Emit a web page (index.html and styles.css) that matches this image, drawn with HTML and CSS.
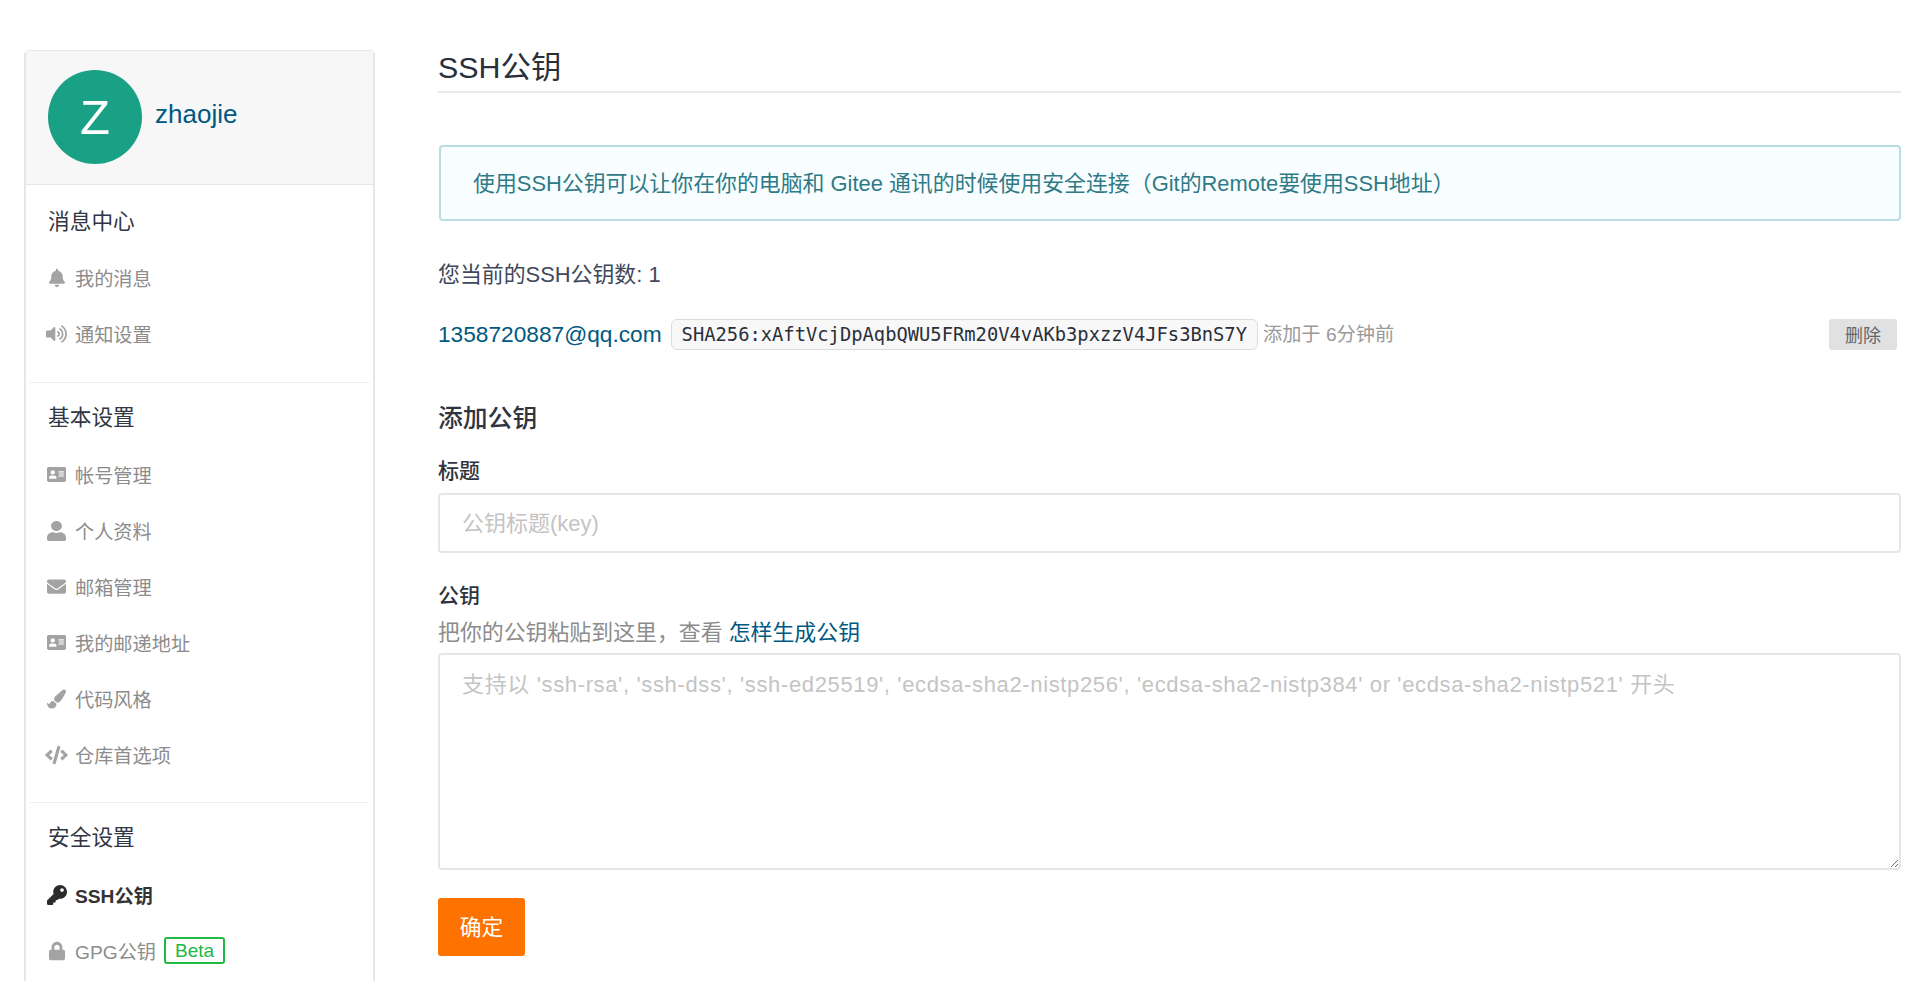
FILE: index.html
```html
<!DOCTYPE html>
<html lang="zh-CN">
<head>
<meta charset="utf-8">
<title>SSH公钥</title>
<link rel="stylesheet" href="styles.css">
</head>
<body>
<svg class="defs" width="0" height="0" aria-hidden="true">
  <symbol id="i-bell" viewBox="0 0 448 512"><path d="M224 512c35.32 0 63.97-28.65 63.97-64H160.03c0 35.35 28.65 64 63.97 64zm215.39-149.71c-19.32-20.76-55.47-51.99-55.47-154.29 0-77.7-54.48-139.9-127.94-155.16V32c0-17.67-14.32-32-31.98-32s-31.98 14.33-31.98 32v20.84C118.56 68.1 64.08 130.3 64.08 208c0 102.3-36.15 133.53-55.47 154.29-6 6.45-8.66 14.16-8.61 21.71.11 16.4 12.98 32 32.1 32h383.8c19.12 0 32-15.6 32.1-32 .05-7.55-2.61-15.27-8.61-21.71z"/></symbol>
  <symbol id="i-volume" viewBox="0 0 576 512"><path d="M215.03 71.05L126.06 160H24c-13.26 0-24 10.74-24 24v144c0 13.25 10.74 24 24 24h102.06l88.97 88.95c15.03 15.03 40.97 4.47 40.97-16.97V88.02c0-21.46-25.96-31.98-40.97-16.97zm233.32-51.08c-11.17-7.33-26.18-4.24-33.51 6.95-7.34 11.17-4.22 26.18 6.95 33.51 66.27 43.49 105.82 116.6 105.82 195.58 0 78.98-39.55 152.09-105.82 195.58-11.17 7.32-14.29 22.34-6.95 33.5 7.04 10.71 21.93 14.56 33.51 6.95C528.27 439.58 576 351.33 576 256S528.27 72.43 448.35 19.97zM480 256c0-63.53-32.06-121.94-85.77-156.24-11.19-7.14-26.03-3.82-33.12 7.46s-3.78 26.21 7.41 33.36C408.27 165.97 432 209.11 432 256s-23.73 90.03-63.48 115.42c-11.19 7.14-14.5 22.07-7.41 33.36 6.51 10.36 21.12 15.14 33.12 7.46C447.94 377.94 480 319.54 480 256zm-141.77-76.87c-11.58-6.33-26.19-2.16-32.61 9.45-6.39 11.61-2.16 26.2 9.45 32.61C327.98 228.28 336 241.63 336 256c0 14.38-8.02 27.72-20.92 34.81-11.61 6.41-15.84 21-9.45 32.61 6.44 11.66 21.05 15.8 32.61 9.45 28.23-15.55 45.77-45 45.77-76.88s-17.54-61.32-45.78-76.86z"/></symbol>
  <symbol id="i-card" viewBox="0 32 576 448"><path d="M528 32H48C21.5 32 0 53.5 0 80v352c0 26.5 21.5 48 48 48h480c26.5 0 48-21.5 48-48V80c0-26.5-21.5-48-48-48zm-352 96c35.3 0 64 28.7 64 64s-28.7 64-64 64-64-28.7-64-64 28.7-64 64-64zm112 236.8c0 10.6-10 19.2-22.4 19.2H86.4C74 384 64 375.4 64 364.8v-19.2c0-31.8 30.1-57.6 67.2-57.6h5c12.3 5.1 25.7 8 39.8 8s27.6-2.9 39.8-8h5c37.1 0 67.2 25.8 67.2 57.6v19.2zM512 312c0 4.4-3.6 8-8 8H360c-4.4 0-8-3.6-8-8v-16c0-4.4 3.6-8 8-8h144c4.4 0 8 3.6 8 8v16zm0-64c0 4.4-3.6 8-8 8H360c-4.4 0-8-3.6-8-8v-16c0-4.4 3.6-8 8-8h144c4.4 0 8 3.6 8 8v16zm0-64c0 4.4-3.6 8-8 8H360c-4.4 0-8-3.6-8-8v-16c0-4.4 3.6-8 8-8h144c4.4 0 8 3.6 8 8v16z"/></symbol>
  <symbol id="i-user" viewBox="0 0 448 512" preserveAspectRatio="none"><path d="M224 256c70.7 0 128-57.3 128-128S294.7 0 224 0 96 57.3 96 128s57.3 128 128 128zm89.6 32h-16.7c-22.2 10.2-46.9 16-72.9 16s-50.6-5.8-72.9-16h-16.7C60.2 288 0 348.2 0 422.4V464c0 26.5 21.5 48 48 48h352c26.5 0 48-21.5 48-48v-41.6c0-74.2-60.2-134.4-134.4-134.4z"/></symbol>
  <symbol id="i-mail" viewBox="0 64 512 384"><path d="M502.3 190.8c3.9-3.1 9.7-.2 9.7 4.7V400c0 26.5-21.5 48-48 48H48c-26.5 0-48-21.5-48-48V195.6c0-5 5.7-7.8 9.7-4.7 22.4 17.4 52.1 39.5 154.1 113.6 21.1 15.4 56.7 47.8 92.2 47.6 35.7.3 72-32.8 92.3-47.6 102-74.1 131.6-96.3 154-113.7zM256 320c23.2.4 56.6-29.2 73.4-41.4 132.7-96.3 142.8-104.7 173.4-128.7 5.8-4.5 9.2-11.5 9.2-18.9v-19c0-26.5-21.5-48-48-48H48C21.5 64 0 85.5 0 112v19c0 7.4 3.4 14.3 9.2 18.9 30.6 23.9 40.7 32.4 173.4 128.7 16.8 12.2 50.2 41.8 73.4 41.4z"/></symbol>
  <symbol id="i-brush" viewBox="0 0 512 512"><path d="M167.02 309.34c-40.12 2.58-76.53 17.86-97.19 72.3-2.35 6.21-8 9.98-14.59 9.98-11.11 0-45.46-27.67-55.25-34.35C0 439.62 37.93 512 128 512c75.86 0 128-43.77 128-120.19 0-3.11-.65-6.08-.97-9.13l-88.01-73.34zM457.89 0c-15.16 0-29.37 6.71-40.21 16.45C213.27 199.05 192 203.34 192 257.09c0 13.7 3.25 26.76 8.73 38.7l63.82 53.18c7.21 1.8 14.64 3.03 22.39 3.03 62.11 0 98.11-45.47 211.16-256.46 7.38-14.35 13.9-29.85 13.9-45.99C512 20.64 486 0 457.89 0z"/></symbol>
  <symbol id="i-code" viewBox="0 0 640 512"><path d="M278.9 511.5l-61-17.7c-6.4-1.8-10-8.5-8.2-14.9L346.2 8.7c1.8-6.4 8.5-10 14.9-8.2l61 17.7c6.4 1.8 10 8.5 8.2 14.9L293.8 503.3c-1.9 6.4-8.5 10.1-14.9 8.2zm-114-112.2l43.5-46.4c4.6-4.9 4.3-12.7-.8-17.2L117 256l90.6-79.7c5.1-4.5 5.5-12.3.8-17.2l-43.5-46.4c-4.5-4.8-12.1-5.1-17-.5L3.8 247.2c-5.1 4.7-5.1 12.8 0 17.5l144.1 135.1c4.9 4.6 12.5 4.4 17-.5zm327.2.6l144.1-135.1c5.1-4.7 5.1-12.8 0-17.5L492.1 112.1c-4.8-4.5-12.4-4.3-17 .5L431.6 159c-4.6 4.9-4.3 12.7.8 17.2L523 256l-90.6 79.7c-5.1 4.5-5.5 12.3-.8 17.2l43.5 46.4c4.5 4.9 12.1 5.1 17 .6z"/></symbol>
  <symbol id="i-key" viewBox="0 0 512 512"><path d="M512 176.001C512 273.203 433.202 352 336 352c-11.22 0-22.19-1.062-32.827-3.069l-24.012 27.014A23.999 23.999 0 0 1 261.223 384H224v40c0 13.255-10.745 24-24 24h-40v40c0 13.255-10.745 24-24 24H24c-13.255 0-24-10.745-24-24v-78.059c0-6.365 2.529-12.47 7.029-16.971l161.802-161.802C163.108 213.814 160 195.271 160 176 160 78.798 238.797.001 335.999 0 433.488-.001 512 78.511 512 176.001zM336 128c0 26.51 21.49 48 48 48s48-21.49 48-48-21.49-48-48-48-48 21.49-48 48z"/></symbol>
  <symbol id="i-lock" viewBox="0 0 448 512"><path d="M400 224h-24v-72C376 68.2 307.8 0 224 0S72 68.2 72 152v72H48c-26.5 0-48 21.5-48 48v192c0 26.5 21.5 48 48 48h352c26.5 0 48-21.5 48-48V272c0-26.5-21.5-48-48-48zm-104 0H152v-72c0-39.7 32.3-72 72-72s72 32.3 72 72v72z"/></symbol>
</svg>
<div class="page">
  <aside class="sidebar">
    <div class="profile">
      <div class="avatar">Z</div>
      <a class="username" href="#">zhaojie</a>
    </div>
    <section class="group group-first">
      <h4 class="group-title">消息中心</h4>
      <a class="item" href="#"><span class="ico"><svg class="w16"><use href="#i-bell"/></svg></span>我的消息</a>
      <a class="item" href="#"><span class="ico"><svg class="w21"><use href="#i-volume"/></svg></span>通知设置</a>
    </section>
    <section class="group">
      <h4 class="group-title">基本设置</h4>
      <a class="item" href="#"><span class="ico"><svg class="w19 h15"><use href="#i-card"/></svg></span>帐号管理</a>
      <a class="item" href="#"><span class="ico"><svg class="w19"><use href="#i-user"/></svg></span>个人资料</a>
      <a class="item" href="#"><span class="ico"><svg class="w19 h15"><use href="#i-mail"/></svg></span>邮箱管理</a>
      <a class="item" href="#"><span class="ico"><svg class="w19 h15"><use href="#i-card"/></svg></span>我的邮递地址</a>
      <a class="item" href="#"><span class="ico"><svg class="w19"><use href="#i-brush"/></svg></span>代码风格</a>
      <a class="item" href="#"><span class="ico"><svg class="w23"><use href="#i-code"/></svg></span>仓库首选项</a>
    </section>
    <section class="group">
      <h4 class="group-title">安全设置</h4>
      <a class="item active" href="#"><span class="ico"><svg class="w20"><use href="#i-key"/></svg></span>SSH公钥</a>
      <a class="item" href="#"><span class="ico"><svg class="w16"><use href="#i-lock"/></svg></span>GPG公钥<span class="beta">Beta</span></a>
    </section>
  </aside>
  <main class="content">
    <h1 class="title">SSH公钥</h1>
    <div class="notice">使用SSH公钥可以让你在你的电脑和 Gitee 通讯的时候使用安全连接（Git的Remote要使用SSH地址）</div>
    <p class="count">您当前的SSH公钥数: 1</p>
    <div class="key-row">
      <a class="key-name" href="#">1358720887@qq.com</a>
      <code class="fingerprint">SHA256:xAftVcjDpAqbQWU5FRm20V4vAKb3pxzzV4JFs3BnS7Y</code>
      <span class="key-time">添加于 6分钟前</span>
      <button class="btn-delete" type="button">删除</button>
    </div>
    <h3 class="add-title">添加公钥</h3>
    <form class="add-form">
      <label class="field-label" for="key-title">标题</label>
      <input class="field-input" id="key-title" type="text" placeholder="公钥标题(key)">
      <label class="field-label field-label-second" for="key-body">公钥</label>
      <p class="field-help">把你的公钥粘贴到这里，查看 <a href="#">怎样生成公钥</a></p>
      <textarea class="field-area" id="key-body" placeholder="支持以 'ssh-rsa', 'ssh-dss', 'ssh-ed25519', 'ecdsa-sha2-nistp256', 'ecdsa-sha2-nistp384' or 'ecdsa-sha2-nistp521' 开头"></textarea>
      <button class="btn-submit" type="button">确定</button>
    </form>
  </main>
</div>
</body>
</html>
```

FILE: styles.css
```css
* { box-sizing: border-box; }
html, body { margin: 0; height: 981px; overflow: hidden; background: #fff; }
body {
  font-family: "Liberation Sans", "Noto Sans CJK SC", sans-serif;
  font-size: 21.9px;
  color: #40485b;
}
a { text-decoration: none; color: #005980; }
.defs { position: absolute; }

.page { display: flex; align-items: flex-start; height: 981px; padding: 0 19px 0 24px; gap: 63px; }

.sidebar {
  flex: 0 0 351px;
  margin-top: 50px;
  height: 1100px;
  border: 1px solid #e6e6e6;
  border-width: 1px 2px;
  border-radius: 5px;
}
.profile {
  display: flex;
  align-items: center;
  gap: 13px;
  height: 134px;
  padding: 0 0 2px 22px;
  background: #f7f7f7;
  border-bottom: 1px solid #e6e6e6;
}
.avatar {
  width: 94px;
  height: 94px;
  border-radius: 50%;
  background: #1aa185;
  color: #fff;
  font-size: 49px;
  line-height: 94px;
  text-align: center;
}
.username { margin-bottom: 4px; font-size: 26px; }

.group { margin: 0 3px; padding: 20px 0 17px; border-top: 1px solid #f0f0f0; }
.group-first { padding: 22px 0 18px; border-top: 0; }
.group-first .group-title { margin-bottom: 15px; }
.group-title {
  margin: 0 0 16px 19px;
  font-size: 21.7px;
  font-weight: 400;
  line-height: 30px;
  color: #303643;
}
.item {
  display: flex;
  align-items: center;
  height: 56px;
  padding-bottom: 5px;
  font-size: 19.2px;
  color: #8c8c8c;
}
.ico { flex: 0 0 46px; display: flex; justify-content: center; padding: 0 5px 0 14px; }
.ico svg { height: 20px; fill: #a3a3a3; }
.w16 { width: 16px; }
.w19 { width: 19px; }
.w20 { width: 20px; }
.w21 { width: 21px; }
.w23 { width: 23px; }
.ico svg.h15 { height: 15px; }
.item.active { color: #333; font-weight: 700; }
.item.active svg { fill: #2b2b2b; }
.beta {
  margin-left: 8px;
  padding: 0 9px;
  height: 27px;
  border: 2px solid #21ba45;
  border-radius: 3px;
  color: #21ba45;
  font-size: 19px;
  font-weight: 500;
  line-height: 23px;
}

.content { flex: 1; min-width: 0; margin-top: 47px; }
.title {
  margin: 0;
  height: 46px;
  font-size: 30.4px;
  font-weight: 400;
  line-height: 40px;
  color: #2a2f3a;
  border-bottom: 2px solid #e8e8e8;
}
.notice {
  margin: 52px 0 0 1px;
  height: 76px;
  padding-left: 32px;
  border: 2px solid #b9dde2;
  border-radius: 4px;
  background: #f8feff;
  color: #2f7a86;
  line-height: 73px;
}
.count { margin: 39px 0 0; line-height: 30px; }
.key-row { display: flex; align-items: center; height: 32px; margin-top: 28px; }
.key-name { font-size: 22.7px; }
.fingerprint {
  margin-left: 9px;
  padding: 0 10px;
  height: 31px;
  border: 1px solid #dcdcdc;
  border-radius: 6px;
  background: #f8f8f8;
  color: #2b2f38;
  font-family: "DejaVu Sans Mono", monospace;
  font-size: 18.8px;
  line-height: 29px;
}
.key-time { margin-left: 5px; padding-bottom: 2px; font-size: 19.2px; color: #9a9a9a; }
.btn-delete {
  margin: 0 4px 0 auto;
  width: 68px;
  height: 31px;
  border: 0;
  border-radius: 3px;
  background: #e0e1e2;
  color: #666;
  font: inherit;
  font-size: 18px;
}
.add-title { margin: 52px 0 0; font-size: 24.8px; font-weight: 500; line-height: 34px; color: #2f3440; }
.add-form { display: flex; flex-direction: column; align-items: flex-start; }
.field-label { margin-top: 21px; font-size: 21px; font-weight: 500; line-height: 28px; color: #2f3440; }
.field-label-second { margin-top: 29px; }
.field-input, .field-area {
  width: 100%;
  border: 2px solid #e6e6e6;
  border-radius: 4px;
  background: #fff;
  font: inherit;
  font-size: 22px;
  color: #40485b;
  outline: 0;
}
.field-input { height: 60px; margin-top: 8px; padding: 2px 22px 0; }
.field-area { display: block; height: 217px; margin-top: 6px; padding: 15px 22px; line-height: 30px; resize: vertical; }
.field-input::placeholder, .field-area::placeholder { color: #c4c4c4; opacity: 1; }
.field-area::placeholder { letter-spacing: .64px; }
.field-help { margin: 9px 0 0; line-height: 28px; color: #8c8c8c; }
.btn-submit {
  margin-top: 28px;
  width: 87px;
  height: 58px;
  padding: 0 0 3px;
  border: 0;
  border-radius: 3px;
  background: #fe7300;
  color: #fff;
  font: inherit;
  font-size: 21.7px;
}
```
